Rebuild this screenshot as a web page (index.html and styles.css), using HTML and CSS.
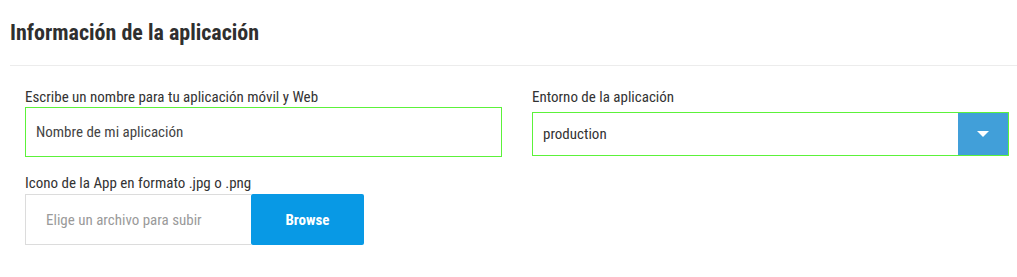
FILE: index.html
```html
<!DOCTYPE html>
<html lang="es">
<head>
<meta charset="utf-8">
<link rel="stylesheet" href="styles.css">
</head>
<body>
<div class="page">
  <h2 class="title">Información de la aplicación</h2>
  <div class="rule"></div>
  <div class="grid">
    <div class="field">
      <label class="label">Escribe un nombre para tu aplicación móvil y Web</label>
      <div class="input">Nombre de mi aplicación</div>
    </div>
    <div class="field">
      <label class="label">Entorno de la aplicación</label>
      <div class="select">
        <span class="select-value">production</span>
        <span class="select-btn"><svg width="12" height="6" viewBox="0 0 12 6"><path d="M0 0 H12 L6 6 Z" fill="#fff"/></svg></span>
      </div>
    </div>
    <div class="field">
      <label class="label">Icono de la App en formato .jpg o .png</label>
      <div class="file">
        <div class="file-input">Elige un archivo para subir</div>
        <div class="file-btn">Browse</div>
      </div>
    </div>
  </div>
</div>
</body>
</html>
```
FILE: styles.css
```css
html, body { margin: 0; padding: 0; background: #fff; }
body {
  font-family: "Roboto Condensed", Roboto, "Liberation Sans", sans-serif;
  font-stretch: condensed;
  color: #333;
}
.page { padding: 0 0 0 10px; }
.title {
  margin: 0;
  padding-top: 20px;
  height: 65px;
  box-sizing: border-box;
  font-size: 22px;
  font-weight: 700;
  color: #2f2f2f;
  line-height: 26px;
}
.rule { height: 1px; background: #ececec; }
.grid {
  display: grid;
  grid-template-columns: 477px 477px;
  column-gap: 30px;
  padding: 21px 0 0 15px;
  row-gap: 16px;
}
.field { display: flex; flex-direction: column; }
.label { font-size: 15px; line-height: 20px; color: #333; }
.input {
  height: 50px;
  box-sizing: border-box;
  border: 1px solid #5cf23a;
  display: flex; align-items: center;
  padding-left: 10px;
  font-size: 15px;
  color: #444;
}
.select {
  margin-top: 5px;
  height: 44px;
  box-sizing: border-box;
  border: 1px solid #5cf23a;
  display: flex;
}
.select-value { flex: 1; display: flex; align-items: center; padding-left: 10px; font-size: 15px; color: #333; }
.select-btn { width: 50px; background: #419fd9; display: flex; align-items: center; justify-content: center; }
.file { display: flex; height: 51px; margin-top: 1px; }
.file-input {
  width: 226px; box-sizing: border-box;
  border: 1px solid #dcdcdc; border-right: none;
  display: flex; align-items: center; padding-left: 20px;
  font-size: 15px; color: #9a9a9a;
}
.file-btn {
  width: 113px; background: #0899e5; border-radius: 2px;
  color: #fff; font-weight: 700; font-size: 15px;
  display: flex; align-items: center; justify-content: center;
}
```
